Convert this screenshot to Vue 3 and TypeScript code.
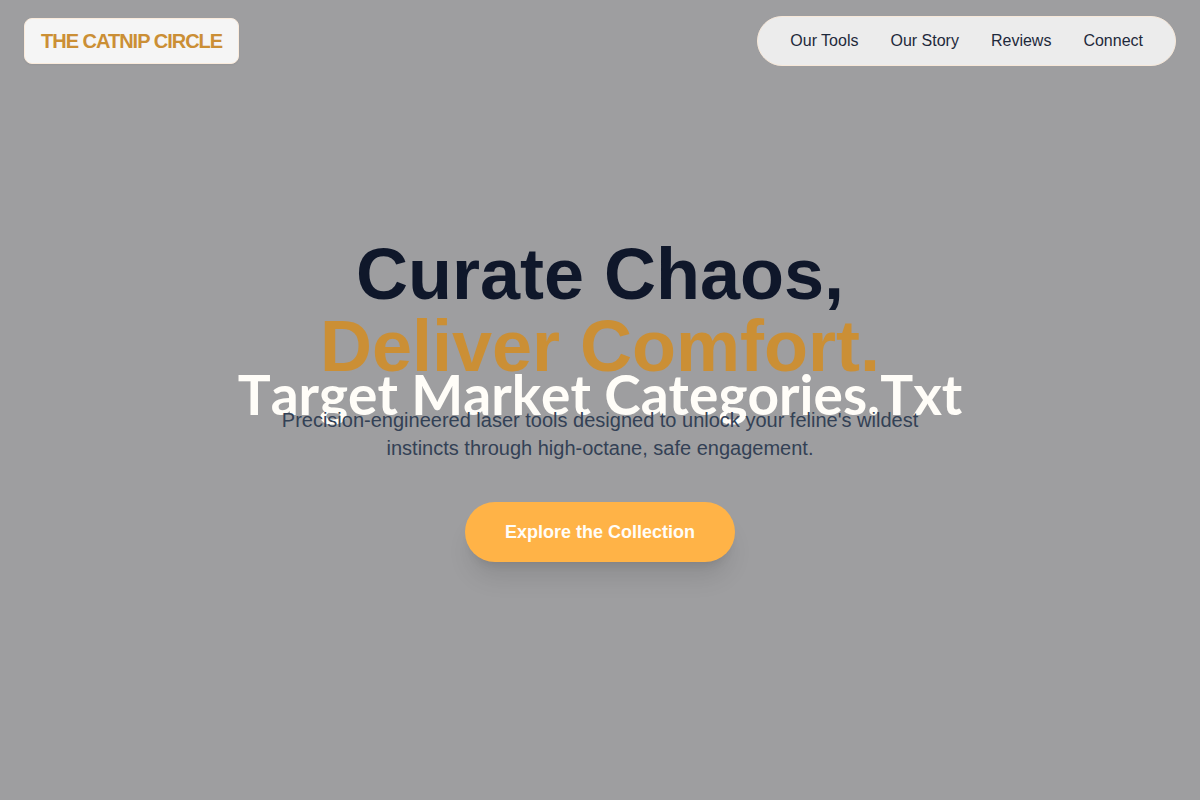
<script setup lang="ts">
interface NavLink {
  label: string
  href: string
}

const links: NavLink[] = [
  { label: 'Our Tools', href: '#tools' },
  { label: 'Our Story', href: '#story' },
  { label: 'Reviews', href: '#reviews' },
  { label: 'Connect', href: '#connect' },
]
</script>

<template>
  <div class="page">
    <header class="topbar">
      <a class="brand" href="#top">THE CATNIP CIRCLE</a>
      <nav class="nav" aria-label="Main">
        <a v-for="link in links" :key="link.href" class="nav-link" :href="link.href">{{ link.label }}</a>
      </nav>
    </header>

    <main class="hero">
      <div class="backdrop">Target Market Categories.Txt</div>
      <div class="content">
        <h1 class="title">
          <span class="line">Curate Chaos,</span>
          <span class="line accent">Deliver Comfort.</span>
        </h1>
        <p class="lead">
          Precision-engineered laser tools designed to unlock your feline's wildest instincts through
          high-octane, safe engagement.
        </p>
        <button class="cta" type="button">Explore the Collection</button>
      </div>
    </main>
  </div>
</template>

<style>
body {
  margin: 0;
  background: #9e9ea0;
}
</style>

<style scoped>
.page {
  display: grid;
  min-height: 100vh;
  background: #9e9ea0;
  font-family: 'Liberation Sans', Arial, sans-serif;
}

.topbar,
.hero {
  grid-area: 1 / 1;
}

.topbar {
  z-index: 2;
  align-self: start;
  display: flex;
  align-items: center;
  justify-content: space-between;
  padding: 16px 24px;
}

.brand {
  padding: 8px 16px;
  border: 1px solid #faebdc;
  border-radius: 8px;
  background: #f5f5f5;
  box-shadow: 0 1px 2px rgba(0, 0, 0, 0.05);
  color: #cb8f35;
  font-size: 20px;
  font-weight: 700;
  line-height: 28px;
  letter-spacing: -1px;
  text-decoration: none;
}

.nav {
  display: flex;
  gap: 32px;
  padding: 12px 32px;
  border: 1px solid #f7e8d9;
  border-radius: 25px;
  background: #ececec;
}

.nav-link {
  color: #1e293b;
  font-size: 16px;
  line-height: 24px;
  text-decoration: none;
}

.hero {
  display: grid;
  place-items: center;
}

.backdrop,
.content {
  grid-area: 1 / 1;
}

.backdrop {
  padding-bottom: 12px;
  color: #fffdf8;
  font-family: Lato, sans-serif;
  font-size: 55px;
  font-weight: 700;
  font-kerning: none;
  line-height: 68px;
  text-align: center;
}

.content {
  z-index: 1;
  display: flex;
  flex-direction: column;
  align-items: center;
  padding: 0 24px;
  text-align: center;
}

.title {
  margin: 0 0 24px;
  color: #0f172a;
  font-size: 72px;
  font-weight: 700;
  line-height: 72px;
}

.line {
  display: block;
}

.accent {
  color: #cb8f35;
}

.lead {
  max-width: 672px;
  margin: 0 0 40px;
  color: #334155;
  font-size: 20px;
  line-height: 28px;
}

.cta {
  padding: 16px 40px;
  border: 0;
  border-radius: 30px;
  background: #ffb347;
  box-shadow:
    0 20px 25px -5px rgba(0, 0, 0, 0.1),
    0 8px 10px -6px rgba(0, 0, 0, 0.1);
  color: #fffdf8;
  font-family: inherit;
  font-size: 18px;
  font-weight: 700;
  line-height: 28px;
  cursor: pointer;
}
</style>
